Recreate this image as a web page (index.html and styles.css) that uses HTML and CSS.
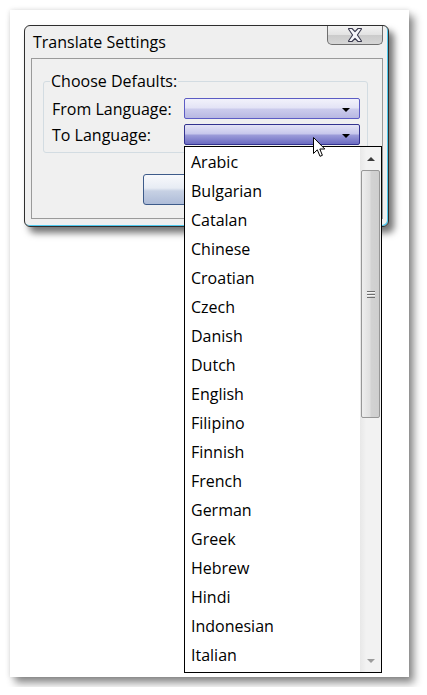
FILE: index.html
```html
<!DOCTYPE html>
<html>
<head>
<meta charset="utf-8">
<link rel="stylesheet" href="styles.css">
</head>
<body>
<div class="page">
  <div class="dialog">
    <div class="titlebar">
      <span class="title">Translate Settings</span>
      <div class="close">
        <svg width="16" height="14" viewBox="0 0 16 14"><path d="M1.5 1 Q1.5 0.5 2 0.5 H5 L8 3.6 L11 0.5 H14 Q14.5 0.5 14.5 1 L10.4 7 L14.5 13 Q14.5 13.5 14 13.5 H11 L8 10.4 L5 13.5 H2 Q1.5 13.5 1.5 13 L5.6 7 Z" fill="#f6f6fa" stroke="#3a3a4e" stroke-width="1.1" stroke-linejoin="round"/></svg>
      </div>
    </div>
    <div class="client">
      <fieldset class="group">
        <legend class="legend">Choose Defaults:</legend>
        <div class="row">
          <span class="label">From Language:</span>
          <div class="combo"><span class="arrow"></span></div>
        </div>
        <div class="row">
          <span class="label">To Language:</span>
          <div class="combo combo-active"><span class="arrow"></span></div>
        </div>
      </fieldset>
      <div class="buttons"><div class="btn"></div></div>
    </div>
  </div>

  <div class="droplist">
    <ul class="items">
      <li>Arabic</li>
      <li>Bulgarian</li>
      <li>Catalan</li>
      <li>Chinese</li>
      <li>Croatian</li>
      <li>Czech</li>
      <li>Danish</li>
      <li>Dutch</li>
      <li>English</li>
      <li>Filipino</li>
      <li>Finnish</li>
      <li>French</li>
      <li>German</li>
      <li>Greek</li>
      <li>Hebrew</li>
      <li>Hindi</li>
      <li>Indonesian</li>
      <li>Italian</li>
    </ul>
    <div class="scrollbar">
      <div class="sb-btn"><span class="tri-up"></span></div>
      <div class="thumb"><span class="grip"></span></div>
      <div class="sb-track"></div>
      <div class="sb-btn sb-btn-down"><span class="tri-down"></span></div>
    </div>
  </div>

  <svg class="cursor" width="13" height="21" viewBox="0 0 13 21"><path d="M0.5 0.5 L0.5 16.5 L4.3 12.8 L7 19.3 L9.4 18.3 L6.8 12 L11.8 12 Z" fill="#ffffff" stroke="#000000" stroke-width="1" stroke-linejoin="miter"/></svg>
</div>
</body>
</html>
```

FILE: styles.css
```css
html, body {
  margin: 0;
  padding: 0;
  background: #ffffff;
}

body {
  font-family: "Open Sans", "Noto Sans", sans-serif;
  font-size: 16px;
  color: #000;
}

.page {
  position: relative;
  margin: 10px;
  width: 399px;
  height: 667px;
  box-sizing: border-box;
  padding: 15px 0 0 14px;
  background: #ffffff;
  box-shadow: 5px 6px 8px rgba(0, 0, 0, 0.45), 0 0 5px rgba(0, 0, 0, 0.12);
}

/* ---------- dialog ---------- */
.dialog {
  width: 365px;
  box-sizing: border-box;
  border: 1px solid #2e2e2e;
  border-radius: 6px;
  background: #efefef;
  box-shadow: inset -1px -1px 0 #4fc9ee, 5px 6px 7px rgba(0, 0, 0, 0.55);
  display: flex;
  flex-direction: column;
}

.titlebar {
  height: 32px;
  display: flex;
  align-items: center;
  padding-left: 8px;
}

.title {
  flex: 1;
  line-height: 20px;
}

.close {
  align-self: flex-start;
  width: 56px;
  height: 19px;
  margin-right: 5px;
  box-sizing: border-box;
  border: 1px solid #6e6e6e;
  border-top: none;
  border-radius: 0 0 5px 5px;
  background: linear-gradient(to bottom, #f3f3f3 0%, #e2e2e2 50%, #cbcbcb 51%, #d6d6d6 100%);
  display: flex;
  align-items: center;
  justify-content: center;
}

.client {
  margin: 0 5px 7px 6px;
  height: 161px;
  box-sizing: border-box;
  border: 1px solid #9a9a9a;
  background: #f0f0f0;
  padding: 12px 14px 0 11px;
}

.group {
  margin: 0;
  border: 1px solid #d3dce2;
  border-radius: 3px;
  padding: 7px 6px 7px 8px;
  display: flex;
  flex-direction: column;
  gap: 5px;
}

.legend {
  padding: 0 1px;
  margin-left: -2px;
  line-height: 20px;
}

.row {
  display: flex;
  align-items: center;
  height: 21px;
}

.label {
  width: 132px;
  line-height: 20px;
}

.combo {
  width: 176px;
  height: 21px;
  box-sizing: border-box;
  border: 1px solid #5c5cc4;
  border-radius: 2px;
  background: linear-gradient(to bottom, #f2f2fb 0%, #e4e4f6 45%, #cbcbec 55%, #b8b8e2 100%);
  display: flex;
  justify-content: flex-end;
  align-items: flex-end;
  padding: 0 9px 6px 0;
}

.combo-active {
  border-color: #33338f;
  background: linear-gradient(to bottom, #e4e4f6 0%, #c8c8ec 45%, #9a9ad8 55%, #6c6cc2 100%);
}

.arrow {
  width: 0;
  height: 0;
  border-left: 4px solid transparent;
  border-right: 4px solid transparent;
  border-top: 4px solid #000;
}

.buttons {
  margin-top: 21px;
  display: flex;
  padding-left: 100px;
}

.btn {
  width: 130px;
  height: 31px;
  box-sizing: border-box;
  border: 1px solid #3d5b8a;
  border-radius: 3px;
  background: linear-gradient(to bottom, #f8f9fc 0%, #e7ecf4 45%, #c7d1e4 55%, #aebcd8 100%);
}

/* ---------- drop list ---------- */
.droplist {
  position: absolute;
  left: 174px;
  top: 136px;
  width: 198px;
  height: 527px;
  box-sizing: border-box;
  border: 1px solid #000;
  background: #fff;
  display: flex;
  overflow: hidden;
}

.items {
  list-style: none;
  margin: 0;
  padding: 1px 0 0;
  flex: 1;
}

.items li {
  height: 29px;
  line-height: 29px;
  padding-left: 6px;
  white-space: nowrap;
}

.scrollbar {
  width: 21px;
  display: flex;
  flex-direction: column;
  background: linear-gradient(to right, #e8e8e8 0%, #f2f2f2 30%, #f2f2f2 100%);
}

.sb-btn {
  height: 23px;
  display: flex;
  align-items: center;
  justify-content: center;
}

.sb-btn-down {
  height: 23px;
}

.tri-up {
  width: 0;
  height: 0;
  border-left: 4px solid transparent;
  border-right: 4px solid transparent;
  border-bottom: 4px solid #3c3c3c;
}

.tri-down {
  width: 0;
  height: 0;
  border-left: 4px solid transparent;
  border-right: 4px solid transparent;
  border-top: 4px solid #9c9c9c;
}

.thumb {
  height: 248px;
  margin: 0 1px;
  box-sizing: border-box;
  border: 1px solid #979797;
  border-radius: 2px;
  background: linear-gradient(to right, #eeeeee 0%, #e0e0e0 45%, #d2d2d2 55%, #cecece 100%);
  display: flex;
  align-items: center;
  justify-content: center;
}

.grip {
  width: 8px;
  height: 7px;
  background: repeating-linear-gradient(to bottom, #6e6e6e 0px, #6e6e6e 1px, #f6f6f6 1px, #f6f6f6 2px, transparent 2px, transparent 3px);
}

.sb-track {
  flex: 1;
}

.cursor {
  position: absolute;
  left: 303px;
  top: 127px;
}
```
